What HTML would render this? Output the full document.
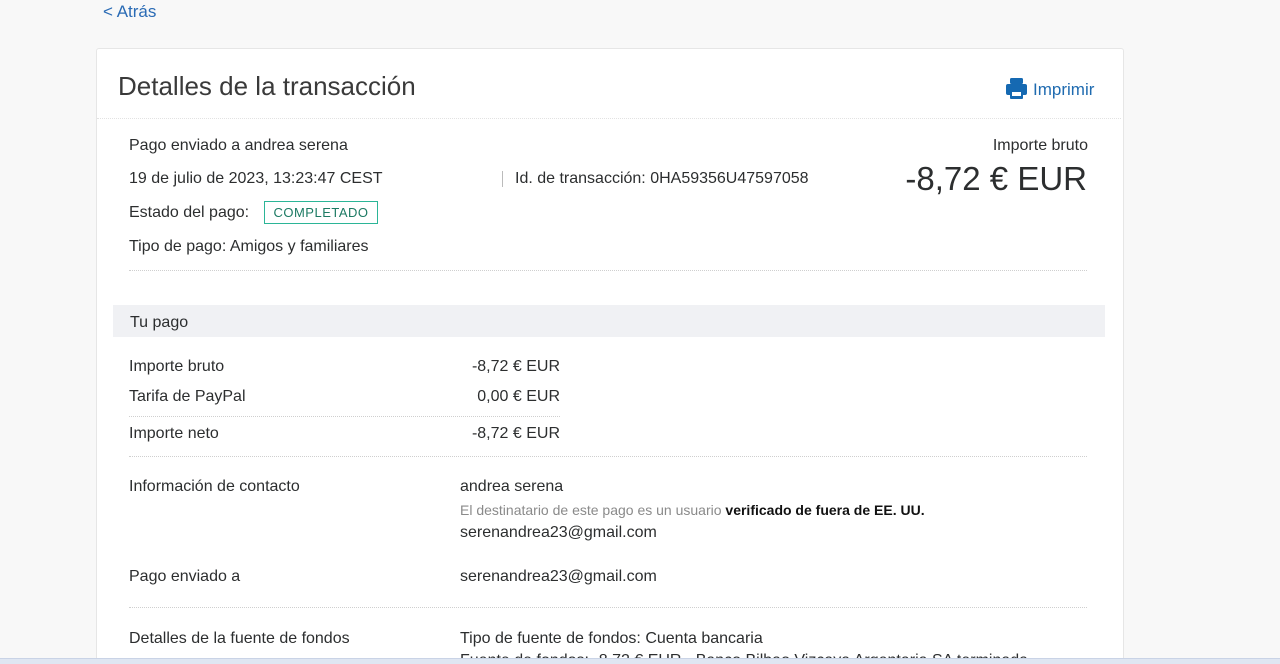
<!DOCTYPE html><html><head><meta charset="utf-8"><style>
html,body{margin:0;width:1280px;height:664px;overflow:hidden}
body{background:#f8f8f8;font-family:"Liberation Sans",sans-serif;color:#2c2e2f;position:relative}
.a{position:absolute;white-space:nowrap}
.card{position:absolute;left:96px;top:48px;width:1026px;height:620px;background:#fff;border:1px solid #e6e6e6;border-radius:3px}
.dl{position:absolute;border-top:1px dotted #cfcfcf}
.t{font-size:16px}
</style></head><body>
<div class="a" style="left:103px;top:2px;font-size:17px;color:#2a6bb5">&lt; Atrás</div>
<div class="card"></div>
<div class="a" style="left:118px;top:71px;font-size:26px;color:#3a3a3a">Detalles de la transacción</div>
<svg class="a" style="left:1005px;top:77px" width="23" height="23" viewBox="0 0 23 23"><rect x="5" y="1" width="13" height="6" rx="1.5" fill="#1569b2"/><rect x="1" y="7" width="21" height="11" rx="2" fill="#1569b2"/><rect x="5" y="13" width="13" height="9" rx="1" fill="#1569b2"/><rect x="7" y="15" width="9" height="4" fill="#fff"/></svg>
<div class="a" style="left:1033px;top:80px;font-size:17px;color:#1f6bb0">Imprimir</div>
<div class="dl" style="left:97px;top:118px;width:1024px;border-top-color:#e2e2e2"></div>
<div class="a t" style="left:129px;top:137px">Pago enviado a andrea serena</div>
<div class="a t" style="left:129px;top:170px">19 de julio de 2023, 13:23:47 CEST</div>
<div class="a" style="left:502px;top:171px;width:1px;height:16px;background:#bbb"></div>
<div class="a t" style="left:515px;top:170px">Id. de transacción: 0HA59356U47597058</div>
<div class="a t" style="left:129px;top:204px">Estado del pago:</div>
<div class="a" style="left:264px;top:201px;width:112px;height:21px;border:1px solid #2bb597;color:#1c7a63;font-size:13px;text-align:center;line-height:21px;letter-spacing:.5px">COMPLETADO</div>
<div class="a t" style="left:129px;top:238px">Tipo de pago: Amigos y familiares</div>
<div class="a t" style="right:192px;top:137px">Importe bruto</div>
<div class="a" style="right:193px;top:160px;font-size:33px">-8,72 € EUR</div>
<div class="dl" style="left:129px;top:270px;width:958px"></div>
<div class="a" style="left:113px;top:305px;width:992px;height:32px;background:#f0f1f4"></div>
<div class="a t" style="left:130px;top:314px">Tu pago</div>
<div class="a t" style="left:129px;top:358px">Importe bruto</div><div class="a t" style="right:720px;top:358px">-8,72 € EUR</div>
<div class="a t" style="left:129px;top:388px">Tarifa de PayPal</div><div class="a t" style="right:720px;top:388px">0,00 € EUR</div>
<div class="dl" style="left:129px;top:416px;width:431px"></div>
<div class="a t" style="left:129px;top:425px">Importe neto</div><div class="a t" style="right:720px;top:425px">-8,72 € EUR</div>
<div class="dl" style="left:129px;top:456px;width:958px"></div>
<div class="a t" style="left:129px;top:478px">Información de contacto</div>
<div class="a t" style="left:460px;top:478px">andrea serena</div>
<div class="a" style="left:460px;top:502px;font-size:14px;color:#8a8a8a">El destinatario de este pago es un usuario <b style="color:#111">verificado de fuera de EE. UU.</b></div>
<div class="a t" style="left:460px;top:524px">serenandrea23@gmail.com</div>
<div class="a t" style="left:129px;top:568px">Pago enviado a</div>
<div class="a t" style="left:460px;top:568px">serenandrea23@gmail.com</div>
<div class="dl" style="left:129px;top:607px;width:958px"></div>
<div class="a t" style="left:129px;top:630px">Detalles de la fuente de fondos</div>
<div class="a t" style="left:460px;top:630px">Tipo de fuente de fondos: Cuenta bancaria</div>
<div class="a t" style="left:460px;top:652px">Fuente de fondos: -8,72 € EUR - Banco Bilbao Vizcaya Argentaria SA terminada</div>
<div class="a" style="left:0;top:658px;width:1280px;height:6px;background:#dfe6f2;border-top:1px solid #c9d3e6"></div>
</body></html>
